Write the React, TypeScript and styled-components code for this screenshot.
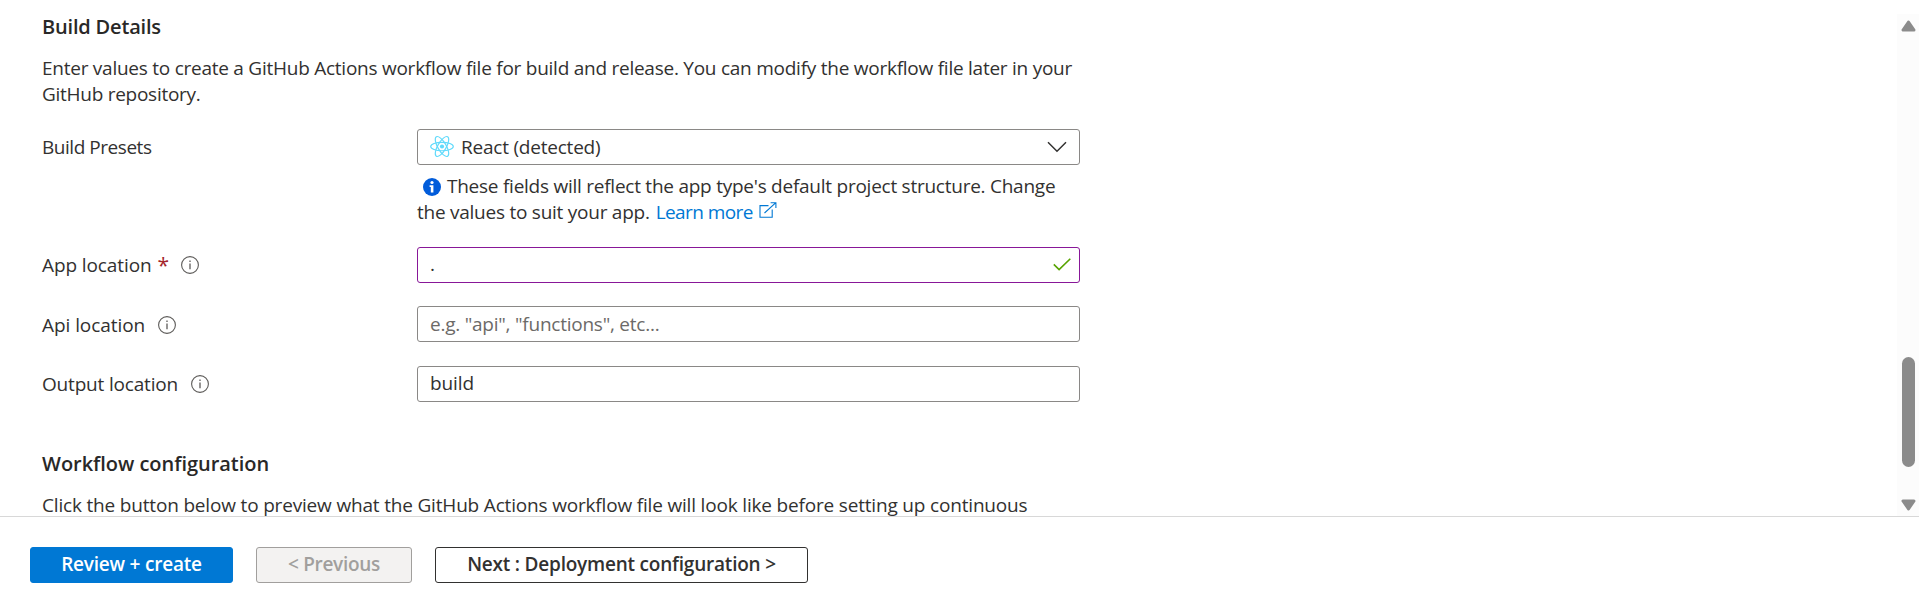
import React from 'react';
import styled, { createGlobalStyle } from 'styled-components';

const GlobalStyle = createGlobalStyle`
  *, *::before, *::after { box-sizing: border-box; }
  body {
    margin: 0;
    background: #fff;
    color: #323130;
    font-family: "Segoe UI", "Open Sans", "Noto Sans", sans-serif;
    font-size: 19px;
    line-height: 26px;
    overflow: hidden;
  }
`;

const Page = styled.div`
  display: flex;
  flex-direction: column;
  height: 606px;
`;

const ScrollArea = styled.div`
  display: flex;
  justify-content: space-between;
  height: 516px;
  overflow: hidden;
`;

const Content = styled.main`
  width: 1080px;
  padding: 14px 0 0 42px;
`;

const Section = styled.section`
  margin-top: 49px;
`;

const Heading = styled.h2<{ $tracking: number }>`
  margin: 0;
  font-size: 20px;
  line-height: 26px;
  font-weight: 600;
  letter-spacing: ${(p) => p.$tracking}px;
  color: #292827;
`;

const Text = styled.span<{ $tracking: number }>`
  letter-spacing: ${(p) => p.$tracking}px;
  white-space: nowrap;
`;

const Paragraph = styled.p`
  display: flex;
  flex-direction: column;
  margin: 15px 0 0;
`;

const Row = styled.div<{ $gap: number }>`
  display: grid;
  grid-template-columns: 375px 663px;
  align-items: start;
  margin-top: ${(p) => p.$gap}px;
`;

const Label = styled.label<{ $top?: number }>`
  display: flex;
  align-items: center;
  height: 26px;
  margin-top: ${(p) => p.$top ?? 5}px;
`;

const Required = styled.span`
  margin-left: 6px;
  color: #a4262c;
  font-size: 21px;
`;

const InfoIcon = styled.svg<{ $gap: number }>`
  margin-left: ${(p) => p.$gap}px;
  flex: none;
`;

const Field = styled.div<{ $valid?: boolean }>`
  display: flex;
  align-items: center;
  justify-content: space-between;
  height: 36px;
  padding: 0 8px 0 12px;
  border: 1px solid ${(p) => (p.$valid ? '#881798' : '#8a8886')};
  border-radius: 3px;
`;

const Input = styled.input<{ $tracking: number; $drop?: number }>`
  flex: 1;
  min-width: 0;
  height: 34px;
  padding: 0 0 ${(p) => p.$drop ?? 0}px;
  border: 0;
  outline: 0;
  background: transparent;
  color: #323130;
  font: inherit;
  letter-spacing: ${(p) => p.$tracking}px;
  &::placeholder { color: #6c6a68; opacity: 1; }
`;

const Check = styled.svg`
  margin-bottom: 2px;
`;

const Select = styled(Field)`
  padding-right: 12px;
`;

const Selected = styled.span`
  display: flex;
  align-items: center;
  gap: 7px;
`;

const ReactMark = styled.svg`
  margin: 0 0 2px;
`;

const Hint = styled.div`
  display: flex;
  flex-direction: column;
  margin-top: 8px;
`;

const HintLine = styled.div`
  display: flex;
  align-items: center;
  height: 26px;
`;

const Badge = styled.svg`
  margin: 2px 6px 0 6px;
`;

const Link = styled.a`
  display: flex;
  align-items: center;
  margin-left: 6px;
  color: #0078d4;
  text-decoration: none;
  svg { margin: 0 0 4px 6px; }
`;

const Scrollbar = styled.div`
  display: flex;
  flex-direction: column;
  align-items: center;
  width: 22px;
  height: 502px;
  margin-top: 14px;
  padding: 6px 0 4px 1px;
  background: #fcfcfc;
`;

const Thumb = styled.div`
  width: 13px;
  height: 110px;
  margin: 325px 0 32px;
  border-radius: 7px;
  background: #8b8b8b;
`;

const Footer = styled.footer`
  display: flex;
  flex: 1;
  align-items: flex-start;
  gap: 23px;
  padding: 30px 0 0 30px;
  border-top: 1px solid #d8d8d8;
`;

const Button = styled.button<{ $kind: 'primary' | 'disabled' | 'default'; $width: number; $tracking: number }>`
  width: ${(p) => p.$width}px;
  height: 36px;
  padding: 0 0 2px;
  border: 1px solid ${(p) => ({ primary: '#0078d4', disabled: '#a19f9d', default: '#323130' })[p.$kind]};
  border-radius: 3px;
  background: ${(p) => ({ primary: '#0078d4', disabled: '#f3f2f1', default: '#fff' })[p.$kind]};
  color: ${(p) => ({ primary: '#fff', disabled: '#a19f9d', default: '#323130' })[p.$kind]};
  font: inherit;
  font-weight: 600;
  letter-spacing: ${(p) => p.$tracking}px;
  white-space: nowrap;
`;

const Info = ({ gap }: { gap: number }) => (
  <InfoIcon $gap={gap} width="18" height="18" viewBox="0 0 18 18" fill="none" stroke="#5d5b59">
    <circle cx="9" cy="9" r="8.4" strokeWidth="1.1" />
    <path d="M9 7.4v5.8M9 4.6v1.4" strokeWidth="1.3" />
  </InfoIcon>
);

const ReactLogo = () => (
  <ReactMark width="24" height="23" viewBox="0 0 24 23" fill="none" stroke="#61dafb" strokeWidth="1.15">
    <ellipse cx="12" cy="11.5" rx="11.3" ry="4.2" />
    <ellipse cx="12" cy="11.5" rx="11.3" ry="4.2" transform="rotate(60 12 11.5)" />
    <ellipse cx="12" cy="11.5" rx="11.3" ry="4.2" transform="rotate(120 12 11.5)" />
    <circle cx="12" cy="11.5" r="2.1" fill="#61dafb" stroke="none" />
  </ReactMark>
);

const Arrow = ({ down }: { down?: boolean }) => (
  <svg width="15" height="12" viewBox="0 0 15 12" fill="#8b8b8b" stroke="#8b8b8b" strokeWidth="3" strokeLinejoin="round">
    <path d={down ? 'M2 2h11L7.5 10z' : 'M2 10h11L7.5 2z'} />
  </svg>
);

export default function App() {
  return (
    <Page>
      <GlobalStyle />
      <ScrollArea>
        <Content>
          <Heading $tracking={-0.18}>Build Details</Heading>
          <Paragraph>
            <Text $tracking={-0.25}>
              Enter values to create a GitHub Actions workflow file for build and release. You can modify the workflow file later in your
            </Text>
            <Text $tracking={-0.272}>GitHub repository.</Text>
          </Paragraph>

          <Row $gap={22}>
            <Label><Text $tracking={-0.46}>Build Presets</Text></Label>
            <div>
              <Select>
                <Selected>
                  <ReactLogo />
                  <Text $tracking={-0.218}>React (detected)</Text>
                </Selected>
                <svg width="20" height="12" viewBox="0 0 20 12" fill="none" stroke="#323130" strokeWidth="1.5">
                  <path d="M1 1.2l9 9 9-9" />
                </svg>
              </Select>
              <Hint>
                <HintLine>
                  <Badge width="18" height="18" viewBox="0 0 18 18">
                    <circle cx="9" cy="9" r="9" fill="#015cda" />
                    <circle cx="9" cy="4.5" r="1.6" fill="#fff" />
                    <path d="M6.6 7.3h3.8v7.2H7.8V8.9H6.6z" fill="#fff" />
                  </Badge>
                  <Text $tracking={-0.25}>These fields will reflect the app type's default project structure. Change</Text>
                </HintLine>
                <HintLine>
                  <Text $tracking={-0.25}>the values to suit your app.</Text>
                  <Link href="#">
                    <Text $tracking={-0.58}>Learn more</Text>
                    <svg width="18" height="16" viewBox="0 0 18 16" fill="none" stroke="#0078d4" strokeWidth="1.1">
                      <path d="M9.5 3.6H1v11.6h12.2V7.6M5.5 11L16.6.8M11.6.7h5.3v5.2" />
                    </svg>
                  </Link>
                </HintLine>
              </Hint>
            </div>
          </Row>

          <Row $gap={22}>
            <Label>
              <Text $tracking={-0.1}>App location</Text>
              <Required>*</Required>
              <Info gap={12} />
            </Label>
            <Field $valid>
              <Input $tracking={0} $drop={2} defaultValue="." />
              <Check width="18" height="13" viewBox="0 0 18 13" fill="none" stroke="#57a300" strokeWidth="1.6">
                <path d="M.8 6.4l5.3 5.2L17.3.7" />
              </Check>
            </Field>
          </Row>

          <Row $gap={23}>
            <Label $top={6}>
              <Text $tracking={-0.06}>Api location</Text>
              <Info gap={13} />
            </Label>
            <Field>
              <Input $tracking={-0.24} placeholder={'e.g. "api", "functions", etc...'} />
            </Field>
          </Row>

          <Row $gap={24}>
            <Label>
              <Text $tracking={-0.184}>Output location</Text>
              <Info gap={13} />
            </Label>
            <Field>
              <Input $tracking={-0.1} $drop={2} defaultValue="build" />
            </Field>
          </Row>

          <Section>
            <Heading $tracking={-0.03}>Workflow configuration</Heading>
            <Paragraph>
              <Text $tracking={-0.178}>
                Click the button below to preview what the GitHub Actions workflow file will look like before setting up continuous
              </Text>
            </Paragraph>
          </Section>
        </Content>
        <Scrollbar>
          <Arrow />
          <Thumb />
          <Arrow down />
        </Scrollbar>
      </ScrollArea>
      <Footer>
        <Button $kind="primary" $width={203} $tracking={-0.202}>Review + create</Button>
        <Button $kind="disabled" $width={156} $tracking={-0.28}>&lt; Previous</Button>
        <Button $kind="default" $width={373} $tracking={-0.21}>Next : Deployment configuration &gt;</Button>
      </Footer>
    </Page>
  );
}
